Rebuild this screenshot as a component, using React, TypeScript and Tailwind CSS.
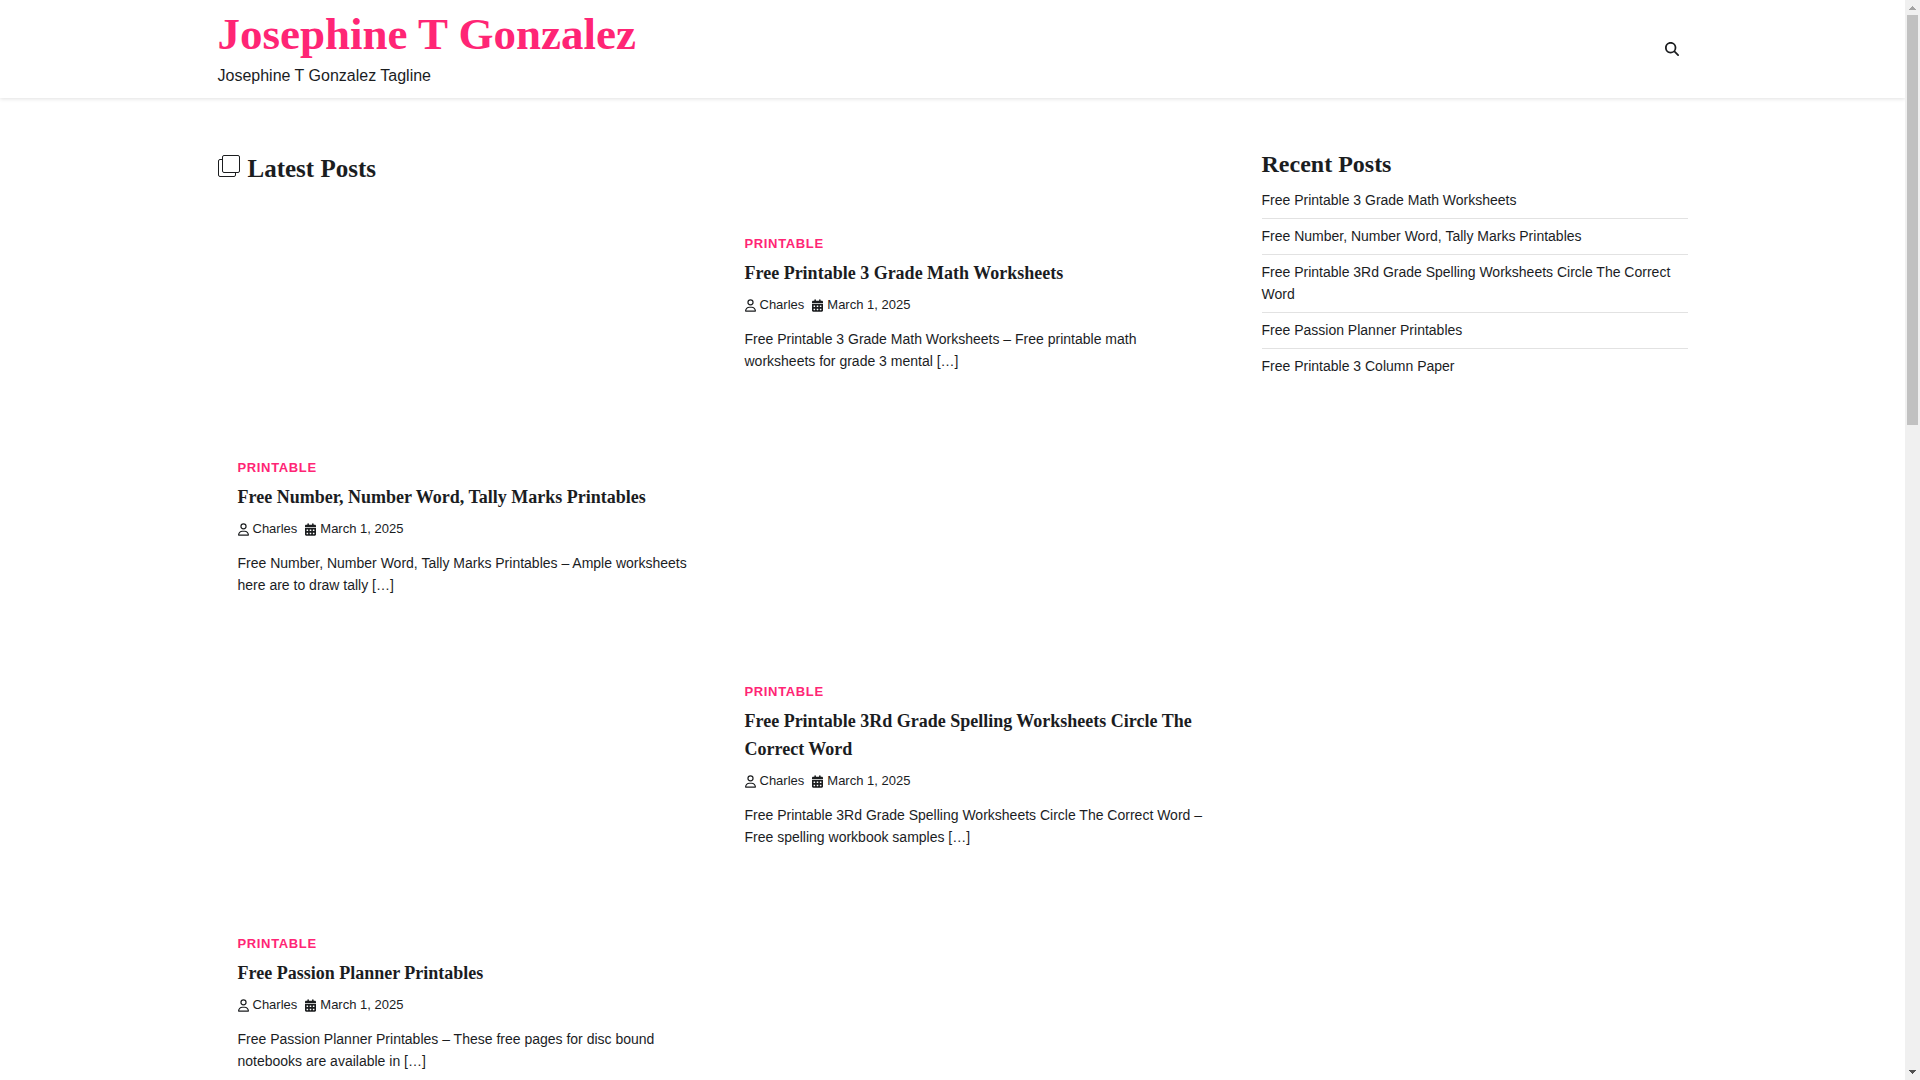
import { FaCalendarDays, FaMagnifyingGlass, FaRegUser } from "react-icons/fa6";

type Post = {
  title: string;
  excerpt: string;
};

const posts: Post[] = [
  {
    title: "Free Printable 3 Grade Math Worksheets",
    excerpt: "Free Printable 3 Grade Math Worksheets – Free printable math worksheets for grade 3 mental […]"
  },
  {
    title: "Free Number, Number Word, Tally Marks Printables",
    excerpt: "Free Number, Number Word, Tally Marks Printables – Ample worksheets here are to draw tally […]"
  },
  {
    title: "Free Printable 3Rd Grade Spelling Worksheets Circle The Correct Word",
    excerpt: "Free Printable 3Rd Grade Spelling Worksheets Circle The Correct Word – Free spelling workbook samples […]"
  },
  {
    title: "Free Passion Planner Printables",
    excerpt: "Free Passion Planner Printables – These free pages for disc bound notebooks are available in […]"
  }
];

const recentPosts = [...posts.map((post) => post.title), "Free Printable 3 Column Paper"];

export default function App() {
  return (
    <div className="flex h-screen overflow-hidden bg-white font-['Liberation_Sans',sans-serif] text-[#1b1d1f]">
      <div className="min-w-0 flex-1 overflow-hidden">
        <SiteHeader />
        <main className="mx-auto flex max-w-[1500px] gap-[30px] px-[15px] pt-[50px]">
          <section className="min-w-0 flex-1">
            <h2 className="flex items-baseline gap-2 font-['Liberation_Serif',serif] text-[25px] leading-[42px] font-bold">
              <StackIcon />
              Latest Posts
            </h2>
            <div className="mt-6">
              {posts.map((post, index) => (
                <PostCard key={post.title} post={post} reversed={index % 2 === 1} />
              ))}
            </div>
          </section>
          <RecentPosts />
        </main>
      </div>
      <ScrollTrack />
    </div>
  );
}

function SiteHeader() {
  return (
    <header className="shadow-[0_1px_4px_rgba(0,0,0,0.12)]">
      <div className="mx-auto flex max-w-[1500px] items-center justify-between px-[15px]">
        <div className="pt-[3px] pb-[11px]">
          <p className="font-['Liberation_Serif',serif] text-[45px] leading-[62px] font-bold text-[#ff2575]">
            <a href="#home">Josephine T Gonzalez</a>
          </p>
          <p className="text-base leading-[22px]">Josephine T Gonzalez Tagline</p>
        </div>
        <button className="p-[9px]" type="button" aria-label="Search">
          <FaMagnifyingGlass className="size-[14px]" />
        </button>
      </div>
    </header>
  );
}

function PostCard({ post, reversed }: { post: Post; reversed: boolean }) {
  return (
    <article className={`flex ${reversed ? "justify-start" : "justify-end"}`}>
      <div className="w-1/2 px-5 pt-5 pb-[66px]">
        <a className="block text-[13px] leading-5 font-bold tracking-wider text-[#ff2575]" href="#printable">
          PRINTABLE
        </a>
        <h3 className="mt-[5px] font-['Liberation_Serif',serif] text-lg leading-7 font-bold">
          <a href="#post">{post.title}</a>
        </h3>
        <div className="mt-2 flex gap-2 text-[13px] leading-5">
          <a className="flex items-center gap-1" href="#charles">
            <FaRegUser className="h-[13px] w-[11px]" />
            Charles
          </a>
          <a className="flex items-center gap-1" href="#date">
            <FaCalendarDays className="h-[13px] w-[11px]" />
            <time>March 1, 2025</time>
          </a>
        </div>
        <p className="mt-[13px] max-w-[460px] text-sm leading-[22px]">{post.excerpt}</p>
      </div>
    </article>
  );
}

function RecentPosts() {
  return (
    <aside className="w-[426px] shrink-0">
      <h2 className="font-['Liberation_Serif',serif] text-2xl leading-8 font-bold">Recent Posts</h2>
      <ul className="mt-[3px]">
        {recentPosts.map((title) => (
          <li className="border-b border-[#e2e2e2] pt-[6px] pb-[7px] text-sm leading-[22px] last:border-b-0" key={title}>
            <a href="#post">{title}</a>
          </li>
        ))}
      </ul>
    </aside>
  );
}

function StackIcon() {
  return (
    <svg className="size-[22px]" viewBox="0 0 22 22" fill="none" stroke="currentColor" aria-hidden="true">
      <rect x="4.5" y="0.5" width="17" height="17" rx="1.5" />
      <path d="M4.5 4.5h-2.5a1.5 1.5 0 0 0-1.5 1.5v14a1.5 1.5 0 0 0 1.5 1.5h14a1.5 1.5 0 0 0 1.5-1.5v-2.5" />
    </svg>
  );
}

function ScrollTrack() {
  return (
    <div className="flex w-[15px] shrink-0 flex-col items-center bg-[#f0f0f0]" aria-hidden="true">
      <svg className="h-[15px] w-[15px] shrink-0 fill-[#a3a3a3]" viewBox="0 0 15 15">
        <path d="M7 6h1v1h1v1h1v1h1v1h-7v-1h1v-1h1v-1h1z" />
      </svg>
      <div className="h-[38%] w-[11px] bg-[#c1c1c1]" />
      <svg className="mt-auto h-[15px] w-[15px] shrink-0 fill-[#505050]" viewBox="0 0 15 15">
        <path d="M4 5h7v1h-1v1h-1v1h-1v1h-1v-1h-1v-1h-1v-1h-1z" />
      </svg>
    </div>
  );
}
